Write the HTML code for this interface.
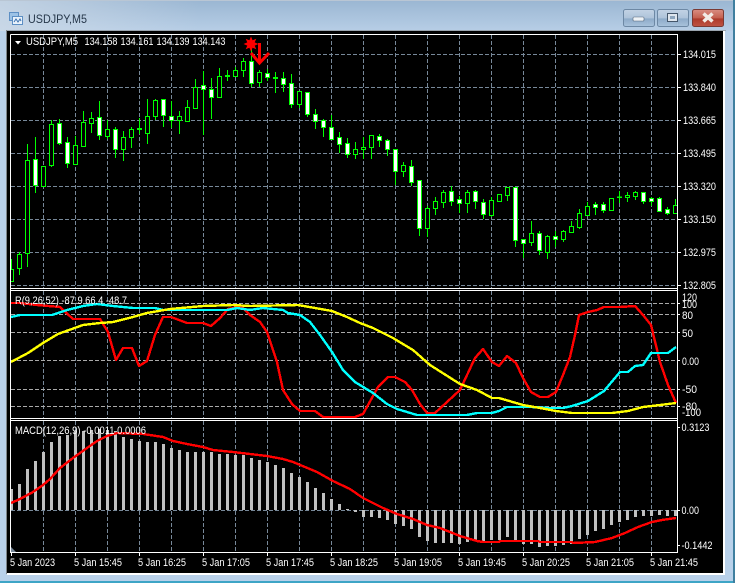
<!DOCTYPE html>
<html><head><meta charset="utf-8"><title>USDJPY,M5</title>
<style>
html,body{margin:0;padding:0;width:735px;height:583px;overflow:hidden;background:#b9d1ea}
svg{display:block}
text{font-family:"Liberation Sans",sans-serif;font-size:11px;fill:#fff}
</style></head><body>
<svg width="735" height="583" viewBox="0 0 735 583" xmlns="http://www.w3.org/2000/svg">
<defs>
<linearGradient id="tb" x1="0" y1="0" x2="0" y2="1"><stop offset="0" stop-color="#9ab6d2"/><stop offset="1" stop-color="#b7cee6"/></linearGradient>
<linearGradient id="tl" x1="0" y1="0" x2="1" y2="0"><stop offset="0" stop-color="#cfdbe8" stop-opacity=".75"/><stop offset="1" stop-color="#cfdbe8" stop-opacity="0"/></linearGradient>
<linearGradient id="bn" x1="0" y1="0" x2="0" y2="1"><stop offset="0" stop-color="#c3d3e5"/><stop offset=".5" stop-color="#aec3da"/><stop offset=".55" stop-color="#8eabc9"/><stop offset="1" stop-color="#a9c3dc"/></linearGradient>
<linearGradient id="bc" x1="0" y1="0" x2="0" y2="1"><stop offset="0" stop-color="#d98e82"/><stop offset=".5" stop-color="#c4604f"/><stop offset=".55" stop-color="#ad3a2b"/><stop offset="1" stop-color="#bf5444"/></linearGradient>
</defs>
<!-- window -->
<rect width="735" height="583" fill="#b9d1ea"/>
<rect width="735" height="31" fill="url(#tb)"/>
<rect width="200" height="31" fill="url(#tl)"/>
<rect x="0" y="0" width="735" height="1" fill="#b9c6d4"/>
<rect x="0" y="581" width="735" height="2" fill="#3ea5c6"/>
<rect x="733" y="0" width="2" height="583" fill="#3f7f9f"/>
<rect x="6" y="30" width="720" height="1" fill="#9aa4ae"/>
<rect x="6" y="30" width="1" height="544" fill="#7d8489"/>
<rect x="723" y="31" width="2" height="544" fill="#fff"/>
<rect x="7" y="573" width="718" height="2" fill="#fff"/>
<rect x="7" y="31" width="716" height="542" fill="#000"/>
<!-- title icon -->
<rect x="9.5" y="12.5" width="9" height="8" fill="#9cc2e6" stroke="#5d8fc4"/>
<rect x="12.5" y="16.5" width="10" height="8" fill="#e9f2fb" stroke="#5d8fc4"/>
<path d="M14 22l2-3 2 3 2-3 1 2" fill="none" stroke="#3b72b0"/>
<text x="28" y="23" textLength="59" lengthAdjust="spacingAndGlyphs" style="font-size:12px;fill:#26374a">USDJPY,M5</text>
<!-- window buttons -->
<rect x="623.5" y="9.5" width="31" height="17" rx="2" fill="url(#bn)" stroke="#6d88a4"/>
<rect x="633" y="17" width="11" height="4" rx="1" fill="#eef2f6" stroke="#55677a" stroke-width=".6"/>
<rect x="657.5" y="9.5" width="31" height="17" rx="2" fill="url(#bn)" stroke="#6d88a4"/>
<rect x="667.5" y="13.5" width="10" height="8" fill="#dfe6ee" stroke="#44566a"/>
<rect x="670" y="16" width="5" height="3" fill="#8ea6be"/>
<rect x="692.5" y="9.5" width="31" height="17" rx="2" fill="url(#bc)" stroke="#7a3a34"/>
<path d="M703.5 13.5l9 8M712.5 13.5l-9 8" stroke="#f2ece6" stroke-width="3.5" fill="none"/>
<!-- grid pane 1 -->
<g fill="none" stroke="#778899" stroke-dasharray="4 2" shape-rendering="crispEdges">
<path d="M11 54.5H677M11 87.5H677M11 120.5H677M11 153.5H677M11 186.5H677M11 219.5H677M11 252.5H677M11 285.5H677"/>
<path d="M43.5 35V288M75.5 35V288M107.5 35V288M139.5 35V288M171.5 35V288M203.5 35V288M235.5 35V288M267.5 35V288M299.5 35V288M331.5 35V288M363.5 35V288M395.5 35V288M427.5 35V288M459.5 35V288M491.5 35V288M523.5 35V288M555.5 35V288M587.5 35V288M619.5 35V288M651.5 35V288"/>
<path d="M43.5 291V418M75.5 291V418M107.5 291V418M139.5 291V418M171.5 291V418M203.5 291V418M235.5 291V418M267.5 291V418M299.5 291V418M331.5 291V418M363.5 291V418M395.5 291V418M427.5 291V418M459.5 291V418M491.5 291V418M523.5 291V418M555.5 291V418M587.5 291V418M619.5 291V418M651.5 291V418"/>
<path d="M43.5 421V552M75.5 421V552M107.5 421V552M139.5 421V552M171.5 421V552M203.5 421V552M235.5 421V552M267.5 421V552M299.5 421V552M331.5 421V552M363.5 421V552M395.5 421V552M427.5 421V552M459.5 421V552M491.5 421V552M523.5 421V552M555.5 421V552M587.5 421V552M619.5 421V552M651.5 421V552"/>
<path d="M11 510.5H677"/>
<path stroke="#aaaaaa" d="M11 303.5H677M11 314.5H677M11 332.5H677M11 360.5H677M11 389.5H677M11 406.5H677"/>
</g>
<!-- wicks -->
<path fill="none" stroke="#00ff00" shape-rendering="crispEdges" d="M11.5 259V281M19.5 252V275M27.5 144V267M35.5 137V193M43.5 166V187M51.5 120V167M59.5 119V145M67.5 137V168M75.5 136V164M83.5 111V146M91.5 112V133M99.5 101V140M107.5 120V139M115.5 127V158M123.5 131V161M131.5 127V148M139.5 118V134M147.5 99V144M155.5 99V120M163.5 99V127M171.5 101V128M179.5 111V134M187.5 100V121M195.5 79V108M203.5 71V135M211.5 78V119M219.5 68V98M227.5 70V81M235.5 67V77M243.5 58V77M251.5 48V87M259.5 70V87M267.5 69V81M275.5 72V93M283.5 72V92M291.5 74V108M299.5 91V108M307.5 92V117M315.5 109V129M323.5 119V137M331.5 115V139M339.5 132V153M347.5 138V158M355.5 142V159M363.5 137V159M371.5 135V159M379.5 134V147M387.5 139V156M395.5 149V185M403.5 162V177M411.5 160V186M419.5 180V236M427.5 206V237M435.5 197V215M443.5 190V208M451.5 186V206M459.5 196V213M467.5 190V213M475.5 190V209M483.5 199V219M491.5 197V217M499.5 194V202M507.5 187V201M515.5 187V247M523.5 239V258M531.5 221V246M539.5 231V255M547.5 235V259M555.5 231V247M563.5 230V242M571.5 221V232M579.5 209V229M587.5 202V215M595.5 202V215M603.5 202V213M611.5 198V210M619.5 191V203M627.5 192V202M635.5 191V200M643.5 192V204M651.5 197V206M659.5 197V211M667.5 207V215M675.5 199V213"/>
<!-- hollow bodies -->
<path fill="#000" stroke="#00ff00" shape-rendering="crispEdges" d="M9.5 269.5h4v12h-4zM17.5 254.5h4v14h-4zM25.5 160.5h4v93h-4zM41.5 166.5h4v20h-4zM49.5 124.5h4v41h-4zM73.5 145.5h4v19h-4zM81.5 122.5h4v24h-4zM89.5 118.5h4v5h-4zM105.5 129.5h4v7h-4zM121.5 137.5h4v12h-4zM129.5 129.5h4v8h-4zM137.5 128.5h4v1h-4zM145.5 116.5h4v17h-4zM153.5 100.5h4v16h-4zM177.5 116.5h4v4h-4zM185.5 107.5h4v14h-4zM193.5 87.5h4v21h-4zM217.5 76.5h4v21h-4zM225.5 75.5h4v1h-4zM233.5 70.5h4v6h-4zM241.5 61.5h4v9h-4zM257.5 72.5h4v10h-4zM273.5 77.5h4v1h-4zM297.5 91.5h4v13h-4zM353.5 149.5h4v5h-4zM361.5 147.5h4v2h-4zM369.5 135.5h4v12h-4zM401.5 165.5h4v6h-4zM425.5 208.5h4v20h-4zM433.5 201.5h4v7h-4zM441.5 192.5h4v10h-4zM465.5 192.5h4v11h-4zM489.5 200.5h4v15h-4zM497.5 194.5h4v7h-4zM505.5 187.5h4v8h-4zM529.5 233.5h4v9h-4zM545.5 236.5h4v16h-4zM561.5 231.5h4v8h-4zM569.5 226.5h4v6h-4zM577.5 213.5h4v14h-4zM585.5 206.5h4v9h-4zM609.5 198.5h4v12h-4zM617.5 197h4v.5h-4zM625.5 195.5h4v2h-4zM633.5 192.5h4v4h-4zM673.5 205.5h4v8h-4z"/>
<!-- filled bodies -->
<path fill="#fff" stroke="#00ff00" shape-rendering="crispEdges" d="M33.5 159.5h4v26h-4zM57.5 123.5h4v20h-4zM65.5 142.5h4v21h-4zM97.5 117.5h4v18h-4zM113.5 129.5h4v20h-4zM161.5 99.5h4v16h-4zM169.5 116.5h4v4h-4zM201.5 85.5h4v4h-4zM209.5 89.5h4v8h-4zM249.5 61.5h4v22h-4zM265.5 73.5h4v4h-4zM281.5 78.5h4v6h-4zM289.5 83.5h4v21h-4zM305.5 92.5h4v22h-4zM313.5 114.5h4v7h-4zM321.5 120.5h4v7h-4zM329.5 127.5h4v12h-4zM337.5 137.5h4v7h-4zM345.5 143.5h4v11h-4zM377.5 136.5h4v4h-4zM385.5 140.5h4v9h-4zM393.5 149.5h4v22h-4zM409.5 166.5h4v16h-4zM417.5 180.5h4v48h-4zM449.5 191.5h4v10h-4zM457.5 199.5h4v4h-4zM473.5 191.5h4v10h-4zM481.5 202.5h4v12h-4zM513.5 187.5h4v53h-4zM521.5 239.5h4v4h-4zM537.5 233.5h4v17h-4zM553.5 236.5h4v3h-4zM593.5 204.5h4v3h-4zM601.5 204.5h4v6h-4zM641.5 192.5h4v9h-4zM649.5 198.5h4v3h-4zM657.5 198.5h4v13h-4zM665.5 209.5h4v4h-4z"/>
<!-- histogram -->
<path fill="none" stroke="#c0c0c0" stroke-width="3" shape-rendering="crispEdges" d="M11.5 510V489M19.5 510V484M27.5 510V469M35.5 510V461M43.5 510V452M51.5 510V442M59.5 510V436M67.5 510V435M75.5 510V431M83.5 510V431M91.5 510V430M99.5 510V429M107.5 510V430M115.5 510V431M123.5 510V437M131.5 510V439M139.5 510V441M147.5 510V442M155.5 510V442M163.5 510V444M171.5 510V448M179.5 510V450M187.5 510V452M195.5 510V452M203.5 510V452M211.5 510V452M219.5 510V454M227.5 510V454M235.5 510V455M243.5 510V455M251.5 510V458M259.5 510V460M267.5 510V462M275.5 510V465M283.5 510V468M291.5 510V473M299.5 510V477M307.5 510V482M315.5 510V488M323.5 510V493M331.5 510V499M339.5 510V504M347.5 510V509M355.5 510V512M363.5 510V517M371.5 510V517M379.5 510V518M387.5 510V520M395.5 510V524M403.5 510V526M411.5 510V529M419.5 510V537M427.5 510V541M435.5 510V543M443.5 510V543M451.5 510V543M459.5 510V544M467.5 510V542M475.5 510V541M483.5 510V541M491.5 510V540M499.5 510V540M507.5 510V537M515.5 510V541M523.5 510V544M531.5 510V544M539.5 510V547M547.5 510V546M555.5 510V546M563.5 510V545M571.5 510V544M579.5 510V539M587.5 510V535M595.5 510V531M603.5 510V529M611.5 510V525M619.5 510V522M627.5 510V520M635.5 510V517M643.5 510V516M651.5 510V516M659.5 510V515M667.5 510V516M675.5 510V516"/>
<!-- indicator lines -->
<g fill="none" stroke-width="2.4" stroke-linejoin="round" shape-rendering="crispEdges">
<polyline stroke="#ff0000" points="11,303 20,303 37,305 60,307 73,319 100,319 108,332 116,360 123,348 132,348 139,366 147,361 155,335 163,317 171,317 187,323 203,323 211,326 220,318 228,309 237,307 243,308 250,315 260,322 267,332 277,362 283,390 292,404 300,411 315,411 323,417 355,417 363,414 378,387 388,377 395,377 405,382 412,390 420,404 427,413 435,413 447,402 460,390 475,358 483,349 492,362 499,366 507,356 516,363 523,378 531,392 540,397 548,397 556,392 563,375 570,357 575,335 579,315 588,312 597,310 604,307 620,307 635,306 643,315 651,325 660,362 668,385 676,403"/>
<polyline stroke="#00ffff" points="11,317 20,315 52,315 67,310 83,306 97,304 113,306 133,308 155,308 163,310 180,310 203,310 227,310 237,308 250,310 263,308 283,310 288,313 300,315 310,322 320,335 332,352 343,370 355,382 373,393 387,404 397,409 417,415 467,415 477,413 492,413 499,411 507,407 532,407 547,408 563,408 572,406 588,401 604,391 620,372 628,372 635,366 643,365 651,353 660,353 668,353 676,347"/>
<polyline stroke="#ffff00" points="11,362 28,353 43,343 58,334 83,325 100,323 113,322 133,317 147,313 170,309 203,306 233,305 250,306 298,305 315,308 332,311 347,317 360,323 373,328 393,338 413,350 430,365 460,384 477,390 492,398 499,398 523,405 540,408 556,411 572,413 612,413 628,411 643,407 660,405 676,403"/>
<polyline stroke="#ff0000" points="11,503 20,499 33,492 43,485 50,479 60,468 73,458 87,448 97,441 107,436 117,433 143,434 163,437 173,441 187,444 203,447 213,450 233,452 250,454 267,456 283,459 293,462 317,472 333,481 350,489 363,498 383,508 397,514 413,519 427,525 440,528 460,536 477,541 483,542 499,542 500,541 538,541 540,542 572,542 573,543 595,542 612,538 625,533 638,527 652,522 662,520 676,518"/>
</g>
<!-- star and arrow -->
<polygon fill="#ff0000" points="251,36.5 252.6,40.3 256.3,38.7 254.7,42.4 258.5,44 254.7,45.6 256.3,49.3 252.6,47.7 251,51.5 249.4,47.7 245.7,49.3 247.3,45.6 243.5,44 247.3,42.4 245.7,38.7 249.4,40.3"/>
<path d="M259.5 43V62" stroke="#ff0000" stroke-width="3" fill="none"/>
<path d="M251 53L259.5 63L269 53" stroke="#ff0000" stroke-width="3" fill="none"/>
<!-- mask left of frame -->
<rect x="7" y="31" width="3" height="542" fill="#000"/>
<rect x="678" y="35" width="45" height="518" fill="#000"/>
<!-- pane frames -->
<g fill="none" stroke="#fff" shape-rendering="crispEdges">
<path d="M10.5 34.5H677.5V552.5M10.5 34.5V552.5M10 288.5H678M10 290.5H678M10 418.5H678M10 420.5H678M10 552.5H678"/>
<path d="M677 54.5h4M677 87.5h4M677 120.5h4M677 153.5h4M677 186.5h4M677 219.5h4M677 252.5h4M677 285.5h4"/>
<path d="M677 303.5h3M677 314.5h3M677 332.5h3M677 360.5h3M677 389.5h3M677 406.5h3M677 427.5h3M677 510.5h3M677 545.5h3"/>
<path d="M11.5 552v4M75.5 552v4M139.5 552v4M203.5 552v4M267.5 552v4M331.5 552v4M395.5 552v4M459.5 552v4M523.5 552v4M587.5 552v4M651.5 552v4"/>
</g>
<polygon points="11,547 16,552 11,552" fill="#778899"/>
<polygon points="15,41 21,41 18,44.5" fill="#fff"/>
<!-- labels -->
<text x="26" y="45" textLength="52" lengthAdjust="spacingAndGlyphs">USDJPY,M5</text>
<text x="84.5" y="45" textLength="33" lengthAdjust="spacingAndGlyphs">134.158</text>
<text x="120.5" y="45" textLength="33" lengthAdjust="spacingAndGlyphs">134.161</text>
<text x="156.5" y="45" textLength="33" lengthAdjust="spacingAndGlyphs">134.139</text>
<text x="192.5" y="45" textLength="33" lengthAdjust="spacingAndGlyphs">134.143</text>
<text x="15" y="304" textLength="112" lengthAdjust="spacingAndGlyphs">R(9,26,52) -87.9 66.4 -48.7</text>
<text x="15" y="434" textLength="131" lengthAdjust="spacingAndGlyphs">MACD(12,26,9) -0.0011 0.0006</text>
<text x="683" y="58" textLength="33" lengthAdjust="spacingAndGlyphs">134.015</text>
<text x="683" y="91" textLength="33" lengthAdjust="spacingAndGlyphs">133.840</text>
<text x="683" y="124" textLength="33" lengthAdjust="spacingAndGlyphs">133.665</text>
<text x="683" y="157" textLength="33" lengthAdjust="spacingAndGlyphs">133.495</text>
<text x="683" y="190" textLength="33" lengthAdjust="spacingAndGlyphs">133.320</text>
<text x="683" y="223" textLength="33" lengthAdjust="spacingAndGlyphs">133.150</text>
<text x="683" y="256" textLength="33" lengthAdjust="spacingAndGlyphs">132.975</text>
<text x="683" y="289" textLength="33" lengthAdjust="spacingAndGlyphs">132.805</text>
<text x="682" y="301" textLength="15" lengthAdjust="spacingAndGlyphs">120</text>
<text x="682" y="308" textLength="15" lengthAdjust="spacingAndGlyphs">100</text>
<text x="682" y="319" textLength="11" lengthAdjust="spacingAndGlyphs">80</text>
<text x="682" y="337" textLength="11" lengthAdjust="spacingAndGlyphs">50</text>
<text x="682" y="365" textLength="17" lengthAdjust="spacingAndGlyphs">0.00</text>
<text x="682" y="393" textLength="15" lengthAdjust="spacingAndGlyphs">-50</text>
<text x="682" y="410" textLength="15" lengthAdjust="spacingAndGlyphs">-80</text>
<text x="682" y="416" textLength="19" lengthAdjust="spacingAndGlyphs">-100</text>
<text x="681.5" y="431" textLength="28" lengthAdjust="spacingAndGlyphs">0.3123</text>
<text x="681.5" y="514" textLength="17.5" lengthAdjust="spacingAndGlyphs">0.00</text>
<text x="681.5" y="549" textLength="31" lengthAdjust="spacingAndGlyphs">-0.1442</text>
<text x="10" y="566" textLength="45" lengthAdjust="spacingAndGlyphs">5 Jan 2023</text>
<text x="74" y="566" textLength="48" lengthAdjust="spacingAndGlyphs">5 Jan 15:45</text>
<text x="138" y="566" textLength="48" lengthAdjust="spacingAndGlyphs">5 Jan 16:25</text>
<text x="202" y="566" textLength="48" lengthAdjust="spacingAndGlyphs">5 Jan 17:05</text>
<text x="266" y="566" textLength="48" lengthAdjust="spacingAndGlyphs">5 Jan 17:45</text>
<text x="330" y="566" textLength="48" lengthAdjust="spacingAndGlyphs">5 Jan 18:25</text>
<text x="394" y="566" textLength="48" lengthAdjust="spacingAndGlyphs">5 Jan 19:05</text>
<text x="458" y="566" textLength="48" lengthAdjust="spacingAndGlyphs">5 Jan 19:45</text>
<text x="522" y="566" textLength="48" lengthAdjust="spacingAndGlyphs">5 Jan 20:25</text>
<text x="586" y="566" textLength="48" lengthAdjust="spacingAndGlyphs">5 Jan 21:05</text>
<text x="650" y="566" textLength="48" lengthAdjust="spacingAndGlyphs">5 Jan 21:45</text>
</svg>
</body></html>
